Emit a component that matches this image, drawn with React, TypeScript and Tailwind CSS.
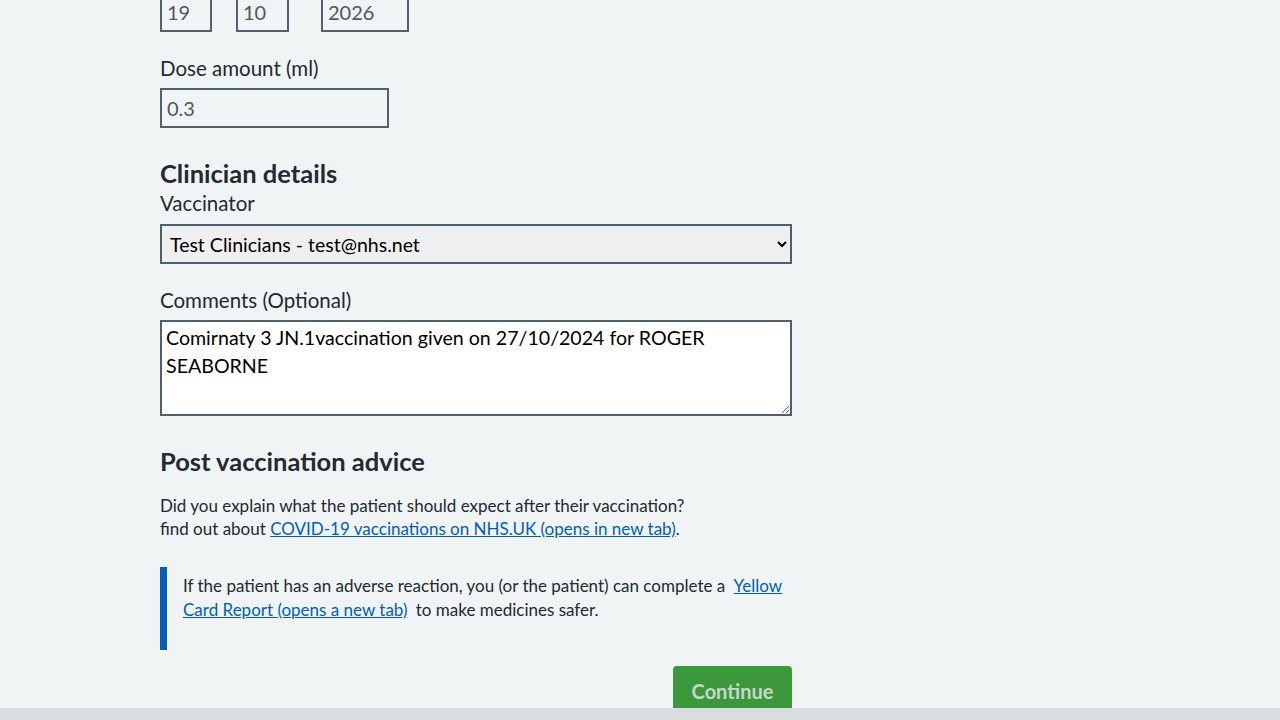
export default function App() {
  return (
    <div className="min-h-screen bg-[#f0f4f5] text-[#212b32]" style={{ fontFamily: "Lato, 'Liberation Sans', sans-serif" }}>
      <main className="w-[632px] ml-[160px]">
        {/* date fields, scrolled partly out of view */}
        <div className="flex -mt-[8px]">
          <input readOnly value="19" className="w-[52px] h-[40px] border-2 border-[#4c6272] bg-transparent px-[5px] text-[20px] text-[#4d5860] mr-[24px] outline-none" />
          <input readOnly value="10" className="w-[53px] h-[40px] border-2 border-[#4c6272] bg-transparent px-[5px] text-[20px] text-[#4d5860] mr-[32px] outline-none" />
          <input readOnly value="2026" className="w-[88px] h-[40px] border-2 border-[#4c6272] bg-transparent px-[5px] text-[20px] text-[#4d5860] outline-none" />
        </div>

        <label className="block mt-[22px] mb-[6px] text-[20.5px] leading-[28px]">Dose amount (ml)</label>
        <input readOnly value="0.3" className="block w-[229px] h-[40px] border-2 border-[#4c6272] bg-transparent px-[5px] text-[20px] text-[#4d5860] outline-none" />

        <h2 className="mt-[29px] text-[25.5px] leading-[32px] font-bold">Clinician details</h2>
        <label className="block mb-[7px] text-[20.5px] leading-[28px]">Vaccinator</label>
        <select className="block w-full h-[40px] border-2 border-[#4c6272] bg-[#efefef] pl-[4px] pr-[2px] text-[19.5px] text-black outline-none" defaultValue="t">
          <option value="t">Test Clinicians - test@nhs.net</option>
        </select>

        <label className="block mt-[22px] mb-[6px] text-[20.5px] leading-[28px]">Comments (Optional)</label>
        <textarea
          readOnly
          className="block w-full h-[96px] border-2 border-[#4c6272] bg-white px-[4px] py-[2px] text-[19.6px] leading-[28px] text-black outline-none"
          value="Comirnaty 3 JN.1vaccination given on 27/10/2024 for ROGER SEABORNE"
        />

        <h2 className="mt-[29px] text-[25.5px] leading-[32px] font-bold">Post vaccination advice</h2>
        <p className="mt-[17px] text-[17px] leading-[23px]">
          Did you explain what the patient should expect after their vaccination?
          <br />
          find out about{" "}
          <a href="#" className="text-[#005eb8] underline">COVID-19 vaccinations on NHS.UK (opens in new tab)</a>.
        </p>

        <div className="mt-[27px] border-l-[7px] border-[#005eb8] pl-[16px] pt-[7px] pb-[28px]">
          <p className="text-[17px] leading-[24px]">
            If the patient has an adverse reaction, you (or the patient) can complete a{" "}
            <a href="#" className="text-[#005eb8] underline ml-[4px]">Yellow Card Report (opens a new tab)</a>{" "}
            <span className="ml-[4px]">to make medicines safer.</span>
          </p>
        </div>

        <div className="flex justify-end mt-[16px]">
          <button className="w-[119px] h-[42px] rounded-t-[4px] bg-[#3b983b] text-[#c9d6c9] text-[20px] font-bold pt-[8px]">
            Continue
          </button>
        </div>
      </main>
      <footer className="h-[40px] bg-[#d8dde0]" />
    </div>
  )
}
